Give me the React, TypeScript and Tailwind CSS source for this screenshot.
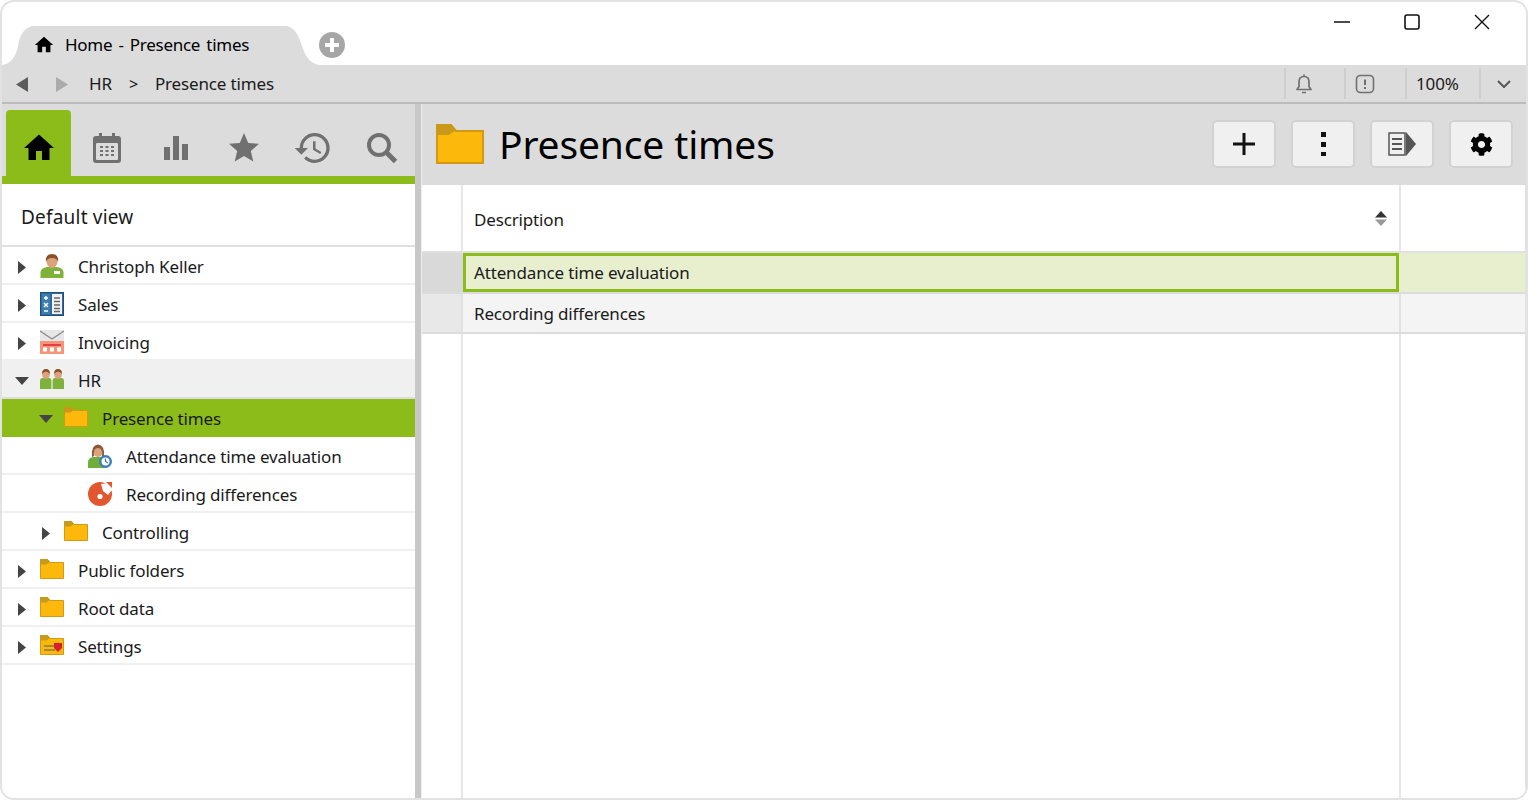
import React from "react";
import { MdHome, MdStar, MdHistory } from "react-icons/md";
import { FaCog } from "react-icons/fa";

const Folder = ({ w = 24, h = 20 }: { w?: number; h?: number }) => (
  <svg width={w} height={h} viewBox="0 0 24 20">
    <path d="M0.5 2 L0.5 19.5 L23.5 19.5 L23.5 3.5 L10 3.5 L7.5 0.5 L1 0.5 Z" fill="#fdb90b" stroke="#d29a12" strokeWidth="1" />
    <path d="M0 0 L7.5 0 L10 3 L6.5 5.5 L0 5.5 Z" fill="#c99a1a" />
  </svg>
);

const PersonIcon = () => (
  <svg width="24" height="24" viewBox="0 0 24 24" className="mt-[2px]">
    <path d="M0.5 24 V18 Q1 14 7 13 L17 13 Q23 14 23.5 18 V24 Z" fill="#7fb23a" />
    <ellipse cx="12" cy="7.5" rx="5.5" ry="6.5" fill="#dba27c" />
    <path d="M6 8 Q5 0 12 0 Q19 0 18 8 Q17 4 12 4 Q7 4 6 8Z" fill="#8b4f27" />
    <rect x="14" y="17" width="6" height="3" fill="#fff" />
  </svg>
);

const SalesIcon = () => (
  <svg width="24" height="24" viewBox="0 0 24 24" className="mt-[2px]">
    <rect x="0.5" y="0.5" width="23" height="23" fill="#2f6a9c" stroke="#1f4f7a" />
    <rect x="2" y="2" width="8" height="20" fill="#3d7db0" />
    <rect x="12" y="2" width="10" height="20" fill="#f2f2f2" />
    <path d="M4 6 H8 M6 4 V8 M4 11 L8 15 M8 11 L4 15 M4 19 H8" stroke="#fff" strokeWidth="1.4" />
    <path d="M14 6 H20 M14 9.5 H20 M14 13 H20 M14 16.5 H20 M14 19.5 H20" stroke="#666" strokeWidth="1.3" />
  </svg>
);

const InvoiceIcon = () => (
  <svg width="24" height="24" viewBox="0 0 24 24" className="mt-[2px]">
    <rect x="0" y="0" width="24" height="13" fill="#e6e6e6" />
    <path d="M0 1 L12 9 L24 1" fill="none" stroke="#8a8a8a" strokeWidth="1.4" />
    <rect x="0" y="11" width="24" height="13" fill="#f4957a" />
    <path d="M3 15 H21" stroke="#d8202a" strokeWidth="1.4" />
    <rect x="3" y="17.5" width="4" height="4" fill="#fff" />
    <rect x="10" y="17.5" width="4" height="4" fill="#fff" />
    <rect x="17" y="17.5" width="4" height="4" fill="#fff" />
  </svg>
);

const HrIcon = () => (
  <svg width="24" height="24" viewBox="0 0 24 24" className="mt-[2px]">
    <path d="M0 21 V13 Q0 10 3 10 L9 10 Q11.4 10 11.4 13 V21 Z" fill="#7fb23a" />
    <path d="M12.6 21 V13 Q12.6 10 15 10 L21 10 Q24 10 24 13 V21 Z" fill="#7fb23a" />
    <ellipse cx="6" cy="6.5" rx="3.8" ry="4.5" fill="#dba27c" />
    <ellipse cx="18" cy="6.5" rx="3.8" ry="4.5" fill="#dba27c" />
    <path d="M2 6 Q2 1 6 1 Q10 1 10 6 Q8 3.5 6 3.5 Q4 3.5 2 6Z" fill="#8b4f27" />
    <path d="M14 6 Q14 1 18 1 Q22 1 22 6 Q20 3.5 18 3.5 Q16 3.5 14 6Z" fill="#8b4f27" />
  </svg>
);

const AttendanceIcon = () => (
  <svg width="24" height="24" viewBox="0 0 24 24" className="mt-[2px]">
    <path d="M0 24 V18 Q0 14 5 13 L13 13 Q18 14 18 18 V24 Z" fill="#6fae3a" />
    <ellipse cx="10" cy="7" rx="5" ry="6" fill="#dba27c" />
    <path d="M4 13 Q3 1 10 0.5 Q17 1 16 13 L14 12 Q15 4 10 4 Q5 4 6 12 Z" fill="#8b5a3a" />
    <circle cx="17.5" cy="17.5" r="6.5" fill="#3f7eb5" />
    <circle cx="17.5" cy="17.5" r="4" fill="#fff" />
    <path d="M17.5 14.5 V17.5 L20 19" stroke="#3f7eb5" strokeWidth="1.2" fill="none" />
  </svg>
);

const RecordingIcon = () => (
  <svg width="24" height="24" viewBox="0 0 24 24" className="mt-[2px]">
    <circle cx="12" cy="12" r="12" fill="#e2572f" />
    <path d="M13 2 L20 1 L24 8 L20 13 L15 9 Z" fill="#fff" />
    <path d="M18 0 H24 V6 Z" fill="#e2572f" />
    <circle cx="12" cy="14.5" r="2.6" fill="#fff" />
  </svg>
);

const SettingsFolder = () => (
  <svg width="24" height="20" viewBox="0 0 24 20">
    <path d="M0.5 2 L0.5 19.5 L23.5 19.5 L23.5 3.5 L10 3.5 L7.5 0.5 L1 0.5 Z" fill="#fdb90b" stroke="#d29a12" strokeWidth="1" />
    <path d="M0 0 L7.5 0 L10 3 L6.5 5.5 L0 5.5 Z" fill="#c99a1a" />
    <path d="M4 11 H15 M4 15 H15" stroke="#8a7a50" strokeWidth="1.4" />
    <path d="M14 8 H22 V13 L18 17 L14 13 Z" fill="#d8202a" />
  </svg>
);

const Right = () => (
  <svg width="8" height="13" viewBox="0 0 8 13"><path d="M0 0 L8 6.5 L0 13 Z" fill="#444" /></svg>
);
const Down = () => (
  <svg width="14" height="8" viewBox="0 0 14 8"><path d="M0 0 H14 L7 8 Z" fill="#444" /></svg>
);

type RowProps = {
  label: string;
  icon: React.ReactNode;
  indent?: 0 | 1 | 2;
  arrow?: "right" | "down" | "none";
  variant?: "normal" | "hover" | "active";
};

const Row = ({ label, icon, indent = 0, arrow = "right", variant = "normal" }: RowProps) => {
  const pad = indent === 0 ? "pl-0" : indent === 1 ? "pl-6" : "pl-12";
  const bg =
    variant === "active"
      ? "bg-[#8cbc19] border-[#8cbc19]"
      : variant === "hover"
      ? "bg-[#f0f0f0] border-[#dcdcdc]"
      : "bg-white border-[#f0f0f0]";
  return (
    <div className={`h-[38px] flex items-center border-b-2 box-border ${pad} ${bg}`}>
      <div className="w-[38px] pl-[1px] mt-[4px] flex items-center justify-center shrink-0">
        {arrow === "right" && <Right />}
        {arrow === "down" && <Down />}
      </div>
      <div className="w-6 h-6 flex items-center justify-center shrink-0 -mt-[1px]">{icon}</div>
      <span className="ml-[14px] mt-[4px] text-[17px] tracking-[-0.15px] leading-[24px] text-[#1a1a1a]">{label}</span>
    </div>
  );
};

const HeadBtn = ({ children }: { children: React.ReactNode }) => (
  <button className="w-16 h-12 rounded-[5px] border-2 border-[#d2d2d2] bg-[#f0f0f0] flex items-center justify-center">
    {children}
  </button>
);

const Sep = () => <div className="w-[2px] h-[31px] bg-[#cecece]" />;

const NavCell = ({ children }: { children: React.ReactNode }) => (
  <div className="w-[65px] h-[66px] pt-[10px] box-border flex items-center justify-center">{children}</div>
);

export default function App() {
  return (
    <div className="w-[1528px] h-[800px] bg-white overflow-hidden">
      <div className="w-full h-full box-border border-2 border-[#e2e2e2] rounded-[14px] overflow-hidden flex flex-col bg-white font-['Noto_Sans',sans-serif] text-[#1a1a1a]">
        {/* Title bar */}
        <div className="h-[63px] shrink-0 flex items-end">
          <div className="relative ml-[15px] w-[284px] h-[39px] flex items-center">
            <svg className="absolute -left-[15px] top-0" width="318" height="39" viewBox="0 0 318 39">
              <path d="M0 39 C9 38 14 30 16 20 C18 8 23 0 33 0 L283 0 C292 0 296 8 300 20 C304 32 309 38 318 39 Z" fill="#dcdcdc" />
            </svg>
            <MdHome className="relative ml-[16px] -mt-[2px] text-black" size={22} />
            <span className="relative ml-[10px] -mt-[2px] text-[17px] tracking-[-0.27px] [word-spacing:2px] leading-none text-black whitespace-nowrap">Home - Presence times</span>
          </div>
          <svg className="ml-[18px] mb-[7px]" width="26" height="26" viewBox="0 0 26 26">
            <circle cx="13" cy="13" r="13" fill="#a6a6a6" />
            <path d="M13 6 V20 M6 13 H20" stroke="#fff" strokeWidth="4" />
          </svg>
          <div className="ml-auto self-start flex items-center pr-[36px] pt-[11px] gap-[54px]">
            <svg width="16" height="18" viewBox="0 0 16 18"><path d="M0 9 H16" stroke="#111" strokeWidth="1.4" /></svg>
            <svg width="16" height="18" viewBox="0 0 16 18"><rect x="1" y="2" width="14" height="14" rx="2" fill="none" stroke="#111" strokeWidth="1.6" /></svg>
            <svg width="16" height="18" viewBox="0 0 16 18"><path d="M1 2 L15 16 M15 2 L1 16" stroke="#111" strokeWidth="1.4" /></svg>
          </div>
        </div>

        {/* Breadcrumb bar */}
        <div className="h-[39px] shrink-0 bg-[#dcdcdc] border-b-2 border-[#bcbcbc] box-border flex items-center text-[17px] tracking-[-0.15px] text-[#1a1a1a]">
          <svg className="ml-[14px] mt-[2px]" width="12" height="15" viewBox="0 0 12 15"><path d="M12 0 V15 L0 7.5 Z" fill="#5c5c5c" /></svg>
          <svg className="ml-[28px] mt-[2px]" width="12" height="15" viewBox="0 0 12 15"><path d="M0 0 V15 L12 7.5 Z" fill="#ababab" /></svg>
          <span className="ml-[21px]">HR</span>
          <span className="ml-[17px] text-[16px]">&gt;</span>
          <span className="ml-[17px]">Presence times</span>
          <div className="ml-auto flex items-center h-full">
            <Sep />
            <div className="w-[58px] flex pl-[9px]">
              <svg width="18" height="20" viewBox="0 0 18 20" fill="none" stroke="#707070" strokeWidth="1.7">
                <path d="M2 15.5 H16 L14 12.5 V8 Q14 2.5 9 2.5 Q4 2.5 4 8 V12.5 Z" strokeLinejoin="round" />
                <path d="M9 0.5 V2.5 M7 18.5 H11" />
              </svg>
            </div>
            <Sep />
            <div className="w-[59px] flex pl-[9px]">
              <svg width="20" height="20" viewBox="0 0 20 20" fill="none" stroke="#707070" strokeWidth="1.6">
                <rect x="1.5" y="1.5" width="17" height="17" rx="4" />
                <path d="M10 5.5 V11 M10 13 V15" stroke="#555" />
              </svg>
            </div>
            <Sep />
            <div className="w-[72px] pl-[9px] mt-[1px]">100%</div>
            <Sep />
            <div className="w-[44px] pl-[2px] flex justify-center">
              <svg width="14" height="8" viewBox="0 0 14 8" fill="none" stroke="#555" strokeWidth="2"><path d="M1 1 L7 7 L13 1" /></svg>
            </div>
            <div className="w-px" />
          </div>
        </div>

        {/* Body */}
        <div className="flex-1 min-h-0 flex">
          {/* Sidebar */}
          <div className="w-[413px] shrink-0 flex flex-col bg-white">
            <div className="h-[80px] shrink-0 bg-[#dcdcdc] border-b-[8px] border-[#8cbc19] box-border flex items-end pl-1 gap-[3.5px]">
              <div className="w-[65px] h-[66px] pt-[10px] box-border bg-[#8cbc19] rounded-t-[4px] flex items-center justify-center">
                <MdHome size={36} className="text-black" />
              </div>
              <NavCell>
                <svg width="28" height="30" viewBox="0 0 28 30">
                  <path d="M6 0 H9 V3 H19 V0 H22 V3 H25 Q28 3 28 6 V27 Q28 30 25 30 H3 Q0 30 0 27 V6 Q0 3 3 3 H6 Z" fill="#707070" />
                  <rect x="3" y="10" width="22" height="17" rx="1" fill="#dcdcdc" />
                  <path d="M7 14 H10 M12.5 14 H15.5 M18 14 H21 M7 18 H10 M12.5 18 H15.5 M18 18 H21 M7 22 H10 M12.5 22 H15.5 M18 22 H21" stroke="#707070" strokeWidth="2.2" />
                </svg>
              </NavCell>
              <NavCell>
                <svg width="24" height="24" viewBox="0 0 24 24" fill="#707070">
                  <rect x="0" y="11" width="6" height="13" />
                  <rect x="9" y="0" width="6" height="24" />
                  <rect x="18" y="8" width="6" height="16" />
                </svg>
              </NavCell>
              <NavCell>
                <MdStar size={36} className="text-[#707070]" />
              </NavCell>
              <NavCell>
                <MdHistory size={40} className="text-[#707070]" />
              </NavCell>
              <NavCell>
                <svg width="32" height="32" viewBox="0 0 32 32" fill="none" stroke="#707070" className="ml-[1px]">
                  <circle cx="13" cy="13" r="10" strokeWidth="4" />
                  <path d="M20.5 20.5 L29.5 29.5" strokeWidth="5" />
                </svg>
              </NavCell>
            </div>
            <div className="h-[63px] shrink-0 border-b-2 border-[#e0e0e0] box-border flex items-center pl-[19px] pt-[6px] text-[19px] tracking-[0.2px]">Default view</div>
            <Row label="Christoph Keller" icon={<PersonIcon />} />
            <Row label="Sales" icon={<SalesIcon />} />
            <Row label="Invoicing" icon={<InvoiceIcon />} />
            <Row label="HR" icon={<HrIcon />} arrow="down" variant="hover" />
            <Row label="Presence times" icon={<Folder />} indent={1} arrow="down" variant="active" />
            <Row label="Attendance time evaluation" icon={<AttendanceIcon />} indent={2} arrow="none" />
            <Row label="Recording differences" icon={<RecordingIcon />} indent={2} arrow="none" />
            <Row label="Controlling" icon={<Folder />} indent={1} />
            <Row label="Public folders" icon={<Folder />} />
            <Row label="Root data" icon={<Folder />} />
            <Row label="Settings" icon={<SettingsFolder />} />
          </div>

          {/* Splitter */}
          <div className="w-[6px] shrink-0 bg-[#c8c8c8]" />
          <div className="w-px shrink-0 bg-[#eeeeee]" />

          {/* Main */}
          <div className="flex-1 min-w-0 flex flex-col">
            <div className="h-[81px] shrink-0 bg-[#dcdcdc] flex items-center">
              <div className="ml-[14px] -mt-[1px] flex"><Folder w={48} h={40} /></div>
              <span className="ml-[15px] -mt-[2px] text-[39px] tracking-[-0.15px] leading-none text-black">Presence times</span>
              <div className="ml-auto -mt-[1px] flex gap-[15px] pr-[13px]">
                <HeadBtn>
                  <svg width="24" height="24" viewBox="0 0 24 24"><path d="M12 1 V23 M1 12 H23" stroke="#111" strokeWidth="3" /></svg>
                </HeadBtn>
                <HeadBtn>
                  <svg width="6" height="24" viewBox="0 0 6 24" fill="#111" className="ml-[2px]"><rect x="0" y="0" width="5" height="5" /><rect x="0" y="10" width="5" height="5" /><rect x="0" y="20" width="5" height="4" /></svg>
                </HeadBtn>
                <HeadBtn>
                  <svg width="28" height="24" viewBox="0 0 28 24">
                    <rect x="1" y="1" width="16" height="22" fill="#f0f0f0" stroke="#555" strokeWidth="1.5" />
                    <path d="M4 7 H14 M4 12 H14 M4 17 H14" stroke="#555" strokeWidth="2" />
                    <path d="M18 0 L28 12 L18 24 Z" fill="#555" />
                  </svg>
                </HeadBtn>
                <HeadBtn>
                  <FaCog size={23} className="text-black" />
                </HeadBtn>
              </div>
            </div>

            {/* Table */}
            <div className="flex-1 min-h-0 flex flex-col text-[17px] tracking-[-0.15px] bg-white border-r border-[#e2e2e2]">
              <div className="h-[68px] shrink-0 flex border-b-2 border-[#e0e0e0] box-border">
                <div className="w-[41px] shrink-0 border-r-2 border-[#e6e6e6] box-border" />
                <div className="w-[936px] shrink-0 flex items-center justify-between pl-[11px] pr-[12px]">
                  <span className="mt-[3px]">Description</span>
                  <svg width="12" height="15" viewBox="0 0 12 15">
                    <path d="M6 0 L12 6.5 H0 Z" fill="#333" />
                    <path d="M6 15 L12 8.5 H0 Z" fill="#999" />
                  </svg>
                </div>
                <div className="flex-1 border-l-2 border-[#e6e6e6]" />
              </div>
              <div className="h-[41px] shrink-0 flex border-b-2 border-[#dcdcdc] box-border bg-[#e8efcf]">
                <div className="w-[41px] shrink-0 bg-[#d9d9d9]" />
                <div className="w-[936px] shrink-0 border-[3px] border-[#8cbc19] box-border flex items-center pl-[8px]"><span className="mt-[1px]">Attendance time evaluation</span></div>
                <div className="flex-1 ml-[2px]" />
              </div>
              <div className="h-[40px] shrink-0 flex border-b-2 border-[#dcdcdc] box-border bg-[#f4f4f4]">
                <div className="w-[39px] shrink-0 bg-[#e8e8e8]" />
                <div className="w-[2px] shrink-0 bg-[#e2e2e2]" />
                <div className="w-[936px] shrink-0 flex items-center pl-[11px]"><span className="mt-[1px]">Recording differences</span></div>
                <div className="w-[2px] shrink-0 bg-[#e2e2e2]" />
              </div>
              <div className="flex-1 min-h-0 flex">
                <div className="w-[41px] shrink-0 border-r-2 border-[#e6e6e6] box-border" />
                <div className="w-[936px] shrink-0" />
                <div className="flex-1 border-l-2 border-[#e6e6e6]" />
              </div>
            </div>
          </div>
        </div>
      </div>
    </div>
  );
}
